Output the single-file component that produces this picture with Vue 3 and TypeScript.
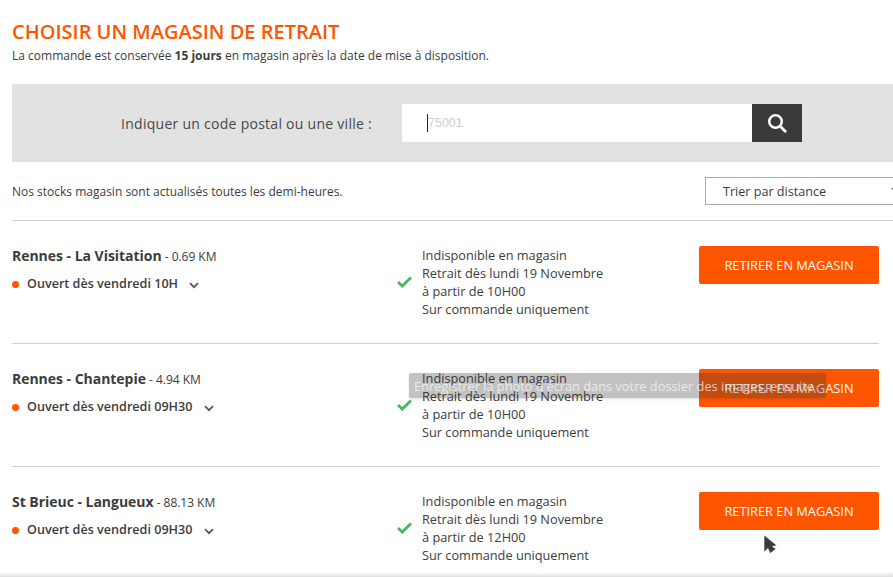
<script setup lang="ts">
interface Store { name: string; dist: string; open: string; from: string }
const stores: Store[] = [
  { name: 'Rennes - La Visitation', dist: '0.69 KM', open: 'Ouvert dès vendredi 10H', from: '10H00' },
  { name: 'Rennes - Chantepie', dist: '4.94 KM', open: 'Ouvert dès vendredi 09H30', from: '10H00' },
  { name: 'St Brieuc - Langueux', dist: '88.13 KM', open: 'Ouvert dès vendredi 09H30', from: '12H00' },
]
</script>

<template>
  <div class="page">
    <h1 class="title">CHOISIR UN MAGASIN DE RETRAIT</h1>
    <p class="sub">La commande est conservée <b>15 jours</b> en magasin après la date de mise à disposition.</p>

    <div class="search">
      <span class="search-label">Indiquer un code postal ou une ville :</span>
      <div class="input"><i class="caret"></i><span class="ph">75001</span></div>
      <div class="go">
        <svg width="20" height="20" viewBox="0 0 20 20" fill="none" stroke="#fff">
          <circle cx="8.5" cy="8.5" r="6.3" stroke-width="2.5" />
          <path d="M13.2 13.2 L18.2 18.2" stroke-width="2.8" stroke-linecap="round" />
        </svg>
      </div>
    </div>

    <div class="sortbar">
      <span class="note">Nos stocks magasin sont actualisés toutes les demi-heures.</span>
      <div class="select">Trier par distance<i class="sel-arrow"></i></div>
    </div>

    <div class="list">
      <div v-for="s in stores" :key="s.name" class="row">
        <div class="info">
          <div class="name"><b>{{ s.name }}</b><span class="dist"> - {{ s.dist }}</span></div>
          <div class="open">
            <i class="dot"></i><span>{{ s.open }}</span>
            <svg class="chev" width="10" height="7" viewBox="0 0 10 7" fill="none" stroke="#555" stroke-width="1.7">
              <path d="M1 1.2 L5 5.2 L9 1.2" />
            </svg>
          </div>
        </div>
        <svg class="check" width="15" height="12" viewBox="0 0 15 12" fill="none" stroke="#45b95c" stroke-width="2.8">
          <path d="M1 6 L5.2 10 L14 1.5" />
        </svg>
        <div class="avail">
          <div>Indisponible en magasin</div>
          <div>Retrait dès lundi 19 Novembre</div>
          <div>à partir de {{ s.from }}</div>
          <div>Sur commande uniquement</div>
        </div>
        <button class="cta">RETIRER EN MAGASIN</button>
      </div>
    </div>

    <div class="toast">Enregistrer la photo d'écran dans votre dossier des images, ensuite</div>
    <svg class="pointer" width="16" height="23" viewBox="0 0 16 23">
      <path d="M1 1 L1 18 L5 14.5 L7 19.5 L13 15 L9.5 12.5 L14 11.5 Z" fill="#3a3a3a" stroke="#fff" stroke-width="0.6" />
    </svg>
    <div class="bottom-edge"></div>
  </div>
</template>

<style>
html, body { margin: 0; background: #fff; overflow: hidden; }
</style>

<style scoped>
.page {
  position: relative;
  width: 893px;
  height: 577px;
  overflow: hidden;
  box-sizing: border-box;
  padding: 20px 0 0 12px;
  font-family: "Open Sans", sans-serif;
  color: #3c3c3c;
  background: #fff;
}
.title {
  margin: 0;
  font-size: 20px;
  line-height: 24px;
  font-weight: 600;
  color: #ff5500;
}
.sub {
  margin: 3px 0 0;
  font-size: 12px;
  line-height: 18px;
}
.sub b { font-weight: 700; }
.search {
  margin-top: 19px;
  height: 78px;
  background: #e2e2e2;
  display: flex;
  align-items: center;
}
.search-label {
  width: 360px;
  box-sizing: border-box;
  text-align: right;
  font-size: 14px;
  letter-spacing: 0.27px;
  color: #484848;
}
.input {
  margin-left: 30px;
  width: 350px;
  height: 38px;
  background: #fff;
  display: flex;
  align-items: center;
  padding-left: 25px;
  box-sizing: border-box;
}
.caret { width: 1px; height: 18px; background: #222; }
.ph {
  font-family: "Liberation Sans", sans-serif;
  font-size: 12.5px;
  color: #cfcfcf;
}
.go {
  width: 50px;
  height: 38px;
  background: #3a3a3a;
  display: flex;
  align-items: center;
  justify-content: center;
}
.sortbar {
  height: 59px;
  display: flex;
  align-items: flex-start;
  justify-content: space-between;
  border-bottom: 1px solid #cfcfcf;
  box-sizing: border-box;
  padding-top: 15px;
}
.note { font-size: 12px; line-height: 29px; }
.select {
  position: relative;
  width: 205px;
  height: 28px;
  flex: none;
  margin-right: -17px;
  box-sizing: border-box;
  border: 1px solid #aaa;
  padding-left: 17px;
  font-size: 12.6px;
  line-height: 27px;
}
.sel-arrow {
  position: absolute;
  right: 12px;
  top: 10px;
  border: 3px solid transparent;
  border-top-color: #555;
  border-bottom: 0;
}
.list { width: 867px; }
.row {
  height: 123px;
  box-sizing: border-box;
  border-bottom: 1px solid #cfcfcf;
  display: flex;
  align-items: flex-start;
  padding-top: 25px;
}
.info { width: 385px; flex: none; }
.name { font-size: 14px; line-height: 20px; white-space: nowrap; letter-spacing: -0.03px; }
.name b { font-weight: 700; }
.dist { font-size: 12px; }
.open {
  margin-top: 7px;
  display: flex;
  align-items: center;
  font-size: 12.6px;
  font-weight: 600;
  line-height: 20px;
}
.dot {
  width: 7px;
  height: 7px;
  border-radius: 50%;
  background: #ff5500;
  margin-right: 8px;
}
.chev { margin-left: 11px; margin-top: 2px; }
.check { flex: none; margin-top: 30px; }
.avail {
  margin-left: 10px;
  width: 277px;
  flex: none;
  font-size: 12.75px;
  line-height: 18px;
}
.cta {
  width: 180px;
  height: 38px;
  flex: none;
  border: 0;
  padding: 0;
  border-radius: 2px;
  background: #ff5500;
  color: #fff;
  font-family: inherit;
  font-size: 12.8px;
}
.toast {
  position: absolute;
  left: 409px;
  top: 373px;
  width: 417px;
  height: 25px;
  box-sizing: border-box;
  padding-left: 5px;
  border-radius: 2px;
  background: rgba(53, 53, 53, 0.3);
  box-shadow: 0 1px 3px rgba(0, 0, 0, 0.12);
  color: rgba(255, 255, 255, 0.7);
  font-size: 12.8px;
  line-height: 26px;
  white-space: nowrap;
  overflow: hidden;
}
.pointer { position: absolute; left: 763px; top: 534px; }
.bottom-edge {
  position: absolute;
  left: 0;
  right: 0;
  bottom: 0;
  height: 5px;
  background: linear-gradient(#fff, #dedede);
}
</style>
